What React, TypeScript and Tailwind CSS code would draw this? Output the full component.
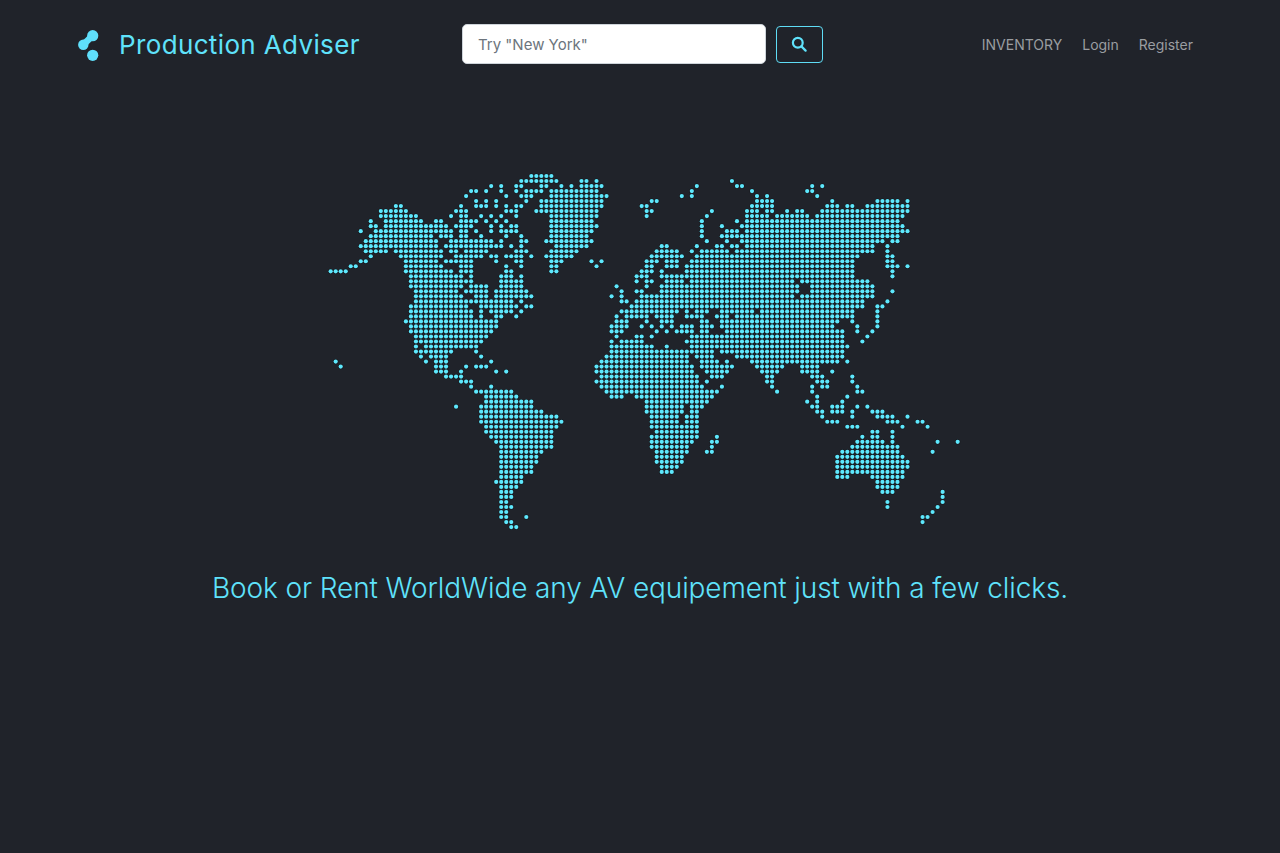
const ROWS = [
"40-44",
"38-45 50 51 53 80",
"32 34 37 38 42 43 46 48 50-54 73 81 82 96 98",
"28 29 31 34 37 39-42 44-53 72 84 95 96",
"27 35 38-40 44-55 70 72 85 87 97",
"29 31 33 39 42-54 64 65 85-88 100 109-113 115",
"13 14 26 29-31 33 35 37 38 42-54 62 63 84-88 99-101 103 104 107-115",
"10-15 25-27 35-37 41-53 63 64 76 83-85 87 88 91 93 94 98-115",
"10-17 24 26 27 30 32 34 37 44-53 63 75 83-87 89-95 97-114",
"8 11-18 21 22 26-29 31 33 35 44-52 74 81 83-113",
"8 9 11-23 25-28 32 34 36 37 44-53 74 78 82-114",
"6 9-24 26 27 29 32 34-37 44-52 74 79-81 83-115",
"8-20 22-24 26 27 30 35 38 44-51 74 78-113",
"7-21 24-32 34 38 39 43-52 75 79 82-110 112 113",
"6-21 23-34 36 38 45-51 66 67 73 77 78 80 81 83-108 111",
"7-11 13-22 24 25 27-31 37-39 44-49 65-69 72 74-79 81-108 111",
"8 14-22 25-30 32 33 35-38 40 43-48 64-70 73-105 111 112",
"6 7 15-21 23-28 33 37 38 44-46 52 54 63-65 67-69 72-104 111 112",
"4 5 15-22 26-28 35 38 44 45 53 63 64 67-69 71-104 111-113 115",
"0-3 15-24 26-28 35 36 44 45 62-64 66 71-104 112",
"16-26 28 34-36 38 61-63 66-104 112",
"16-28 34-38 61 63 64 67-70 72-92 94-107",
"16-26 28-31 34-38 57 63 66-93 96-108",
"17-25 27-31 33-39 58 61 62 66-93 96-108 112",
"17-26 29-31 33-40 56 58 62-92 94-108",
"17-36 38 58 59 61-106 111",
"16-27 30-37 39 40 60-106 109 110",
"16-28 30 32-36 38 58-69 71 73-75 78-84 86-104 109",
"16-28 30 33 34 37 57 59-63 65-68 71-74 77-79 81-104 109",
"15-33 57-59 63 66-68 74 75 78-101 104 109",
"16-33 56-59 62 64 66 68 70-72 74-76 78-100 105 109",
"16-32 56-58 65 67 69-72 74 75 79-102 105 108",
"17-31 57 61 62 64 72-102 107",
"17-30 56 58-62 71-102 106",
"17 19-29 56-64 67 72-103",
"17-24 29 56-76 78-102",
"18 20-23 30 55-71 73-76 81-102",
"1 19 21-23 32 54-71 74-77 79 84-101 103",
"2 21-23 27 29-31 53-72 74-80 85-90 94-97",
"21-23 26 33 35 53-72 75-79 86-89 94-97 100",
"23-26 54-73 76-78 87 88 96-98 104",
"26-28 53-73 75 87 88 97-99 104",
"28 32 54-74 78 88 96 98 99 105",
"29-36 55-77 89 96 105 106",
"31-37 56-58 61-76 97 103",
"31-40 63-75 95 97 102",
"25 30-40 63-70 72-74 96 97 100-102 105 107",
"30-42 63-70 72 73 97 98 100-102 104 108-110",
"30-45 64-69 71-73 98 104 109-112 115",
"30-46 64-69 71-73 99-101 111-113 117 118",
"31-45 64-73 103-105 114 119",
"31-44 65-73 108 109 112",
"32-44 64-73 77 106 108 109 112",
"33-44 64-72 76 77 105-110 112 121 125",
"34-44 64-71 76 104-113",
"34-42 65-71 75 76 102-113 120",
"34-41 65-70 101-114",
"34-41 65-70 101-115",
"34-40 66-69 101-115",
"34-40 66-68 101-114",
"34-38 101-103 108-114",
"33-38 109-113",
"34-37 109-113",
"34-36 110-112 122",
"34-36 122",
"34 35 111 122",
"34-36 111 121",
"34 35 120",
"34 35 39 118 119",
"35 36 118",
"36 37",
];

const DOTS: [number, number][] = [];
ROWS.forEach((row, r) => {
  row.split(" ").forEach((part) => {
    const [a, b] = part.split("-").map(Number);
    for (let c = a; c <= (b ?? a); c++) {
      DOTS.push([330.67 + c * 5.016, 176 + r * 5.015]);
    }
  });
});

export default function App() {
  return (
    <div className="min-h-[853px] bg-[#20232a] font-['Inter','Liberation_Sans',sans-serif]">
      <header className="flex h-[88px] items-center pl-[78px] pr-[87px]">
        <div className="flex w-[384px] items-center gap-[20px]">
          <svg width="21" height="32" viewBox="0 0 21 32" className="mt-[3px] shrink-0">
            <path d="M5.3 14.7 L14.7 5.7" stroke="#5fdffb" strokeWidth="6.5" />
            <circle cx="14.7" cy="5.7" r="5.6" fill="#5fdffb" />
            <circle cx="5.3" cy="14.7" r="5.2" fill="#5fdffb" />
            <circle cx="14.7" cy="25.3" r="5.6" fill="#5fdffb" />
          </svg>
          <span className="mt-[2px] text-[26px] leading-[32px] tracking-[0.36px] text-[#5fe2fb]">Production Adviser</span>
        </div>
        <div className="flex items-center gap-[10px]">
          <input
            placeholder='Try "New York"'
            className="h-[40px] w-[304px] rounded-[5px] border border-[#ced4da] bg-white px-[15px] text-[15px] text-[#6c757d] placeholder:text-[#6c757d] outline-none"
          />
          <button className="flex h-[37px] w-[47px] items-center justify-center rounded-[4px] border border-[#5fdcf5] bg-transparent pr-[2px]">
            <svg width="16" height="16" viewBox="0 0 16 16" fill="none" stroke="#5fe2fb" strokeWidth="2.2">
              <circle cx="6.8" cy="6.8" r="4.9" />
              <path d="M10.4 10.4 L14.6 14.6" strokeLinecap="round" />
            </svg>
          </button>
        </div>
        <nav className="ml-auto flex items-center gap-[20px] text-[14px] text-[#9a9da1]">
          <span>INVENTORY</span>
          <span>Login</span>
          <span>Register</span>
        </nav>
      </header>
      <main className="flex flex-col items-center">
        <svg width="650" height="360" viewBox="315 172 650 360" className="mt-[84px] block">
          {DOTS.map(([x, y], i) => (
            <circle key={`b${i}`} cx={x} cy={y} r="2.6" fill="#15171c" />
          ))}
          {DOTS.map(([x, y], i) => (
            <circle key={i} cx={x} cy={y} r="2.1" fill="#5ee8fd" />
          ))}
        </svg>
        <h1 className="mt-[38px] text-[28px] font-light leading-[36px] tracking-[-0.1px] text-[#5fe2fb]">
          Book or Rent WorldWide any AV equipement just with a few clicks.
        </h1>
      </main>
    </div>
  );
}
